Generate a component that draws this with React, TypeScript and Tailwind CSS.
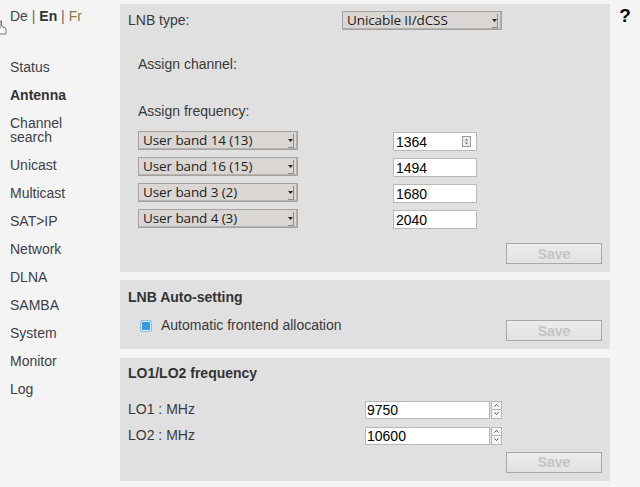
import React from "react";

const navItems = [
  "Status",
  "Antenna",
  "Channel search",
  "Unicast",
  "Multicast",
  "SAT>IP",
  "Network",
  "DLNA",
  "SAMBA",
  "System",
  "Monitor",
  "Log",
];

function DropSelect({ value, width }: { value: string; width: string }) {
  return (
    <div
      className={`${width} h-[19px] flex items-center border border-[#a3a3a3] bg-[#d9d6d3] shadow-[inset_-1px_-1px_0_#b5b2ae] pl-[4px] pr-[3px]`}
      style={{ fontFamily: '"Open Sans", "Noto Sans", sans-serif' }}
    >
      <span className="flex-1 text-[13.5px] leading-none text-[#1e1e1e] tracking-[-0.1px]">{value}</span>
      <span className="flex h-[14px] w-[6px] items-center justify-center border-r border-b border-[#8e8b88]">
        <svg width="5" height="3" viewBox="0 0 5 3">
          <path d="M0 0h5L2.5 3z" fill="#222" />
        </svg>
      </span>
    </div>
  );
}

function SaveButton() {
  return (
    <button className="w-[96px] h-[21px] border border-[#a8a8a8] bg-gradient-to-b from-[#ececec] to-[#e2e2e2] text-[14px] font-bold leading-none text-[#c4c4c4]">
      Save
    </button>
  );
}

function SpinPair() {
  return (
    <div className="flex flex-col w-[11px] h-[18px] ml-px">
      <div className="flex-1 flex items-center justify-center border border-[#b8b8b8] bg-[#f4f4f4]">
        <svg width="5" height="3" viewBox="0 0 5 3">
          <path d="M0.5 2.5L2.5 0.5L4.5 2.5" stroke="#444" strokeWidth="0.9" fill="none" />
        </svg>
      </div>
      <div className="flex-1 flex items-center justify-center border border-t-0 border-[#b8b8b8] bg-[#f4f4f4]">
        <svg width="5" height="3" viewBox="0 0 5 3">
          <path d="M0.5 0.5L2.5 2.5L4.5 0.5" stroke="#444" strokeWidth="0.9" fill="none" />
        </svg>
      </div>
    </div>
  );
}

export default function App() {
  const bands = [
    ["User band 14 (13)", "1364"],
    ["User band 16 (15)", "1494"],
    ["User band 3 (2)", "1680"],
    ["User band 4 (3)", "2040"],
  ];

  return (
    <div
      className="w-[640px] h-[487px] overflow-hidden bg-[#f4f4f4] flex text-[#3a3a3a]"
      style={{ fontFamily: '"Liberation Sans", Arial, sans-serif' }}
    >
      {/* sidebar */}
      <aside className="w-[120px] shrink-0 relative pl-[10px] pt-[8px] text-[14px]">
        <div className="leading-[17px] text-[#444]">
          De <span className="text-[#666]">|</span> <b className="text-[#333]">En</b>{" "}
          <span className="text-[#666]">|</span> <span className="text-[#8c7b3c]">Fr</span>
        </div>
        <svg className="absolute left-[-4px] top-[20px]" width="12" height="16" viewBox="0 0 12 16">
          <path
            d="M4 1v8L2 7.5 0.5 8.5 4 14h6V8.5L8.5 7.5 7 7.6V6.5L5.5 6V1z"
            fill="#fff"
            stroke="#555"
            strokeWidth="0.8"
          />
        </svg>
        <nav className="mt-[35px] flex flex-col gap-[14px] w-[90px]">
          {navItems.map((item) => (
            <a
              key={item}
              className={`block leading-[14px] ${item === "Antenna" ? "font-bold text-[#333]" : "text-[#3e3e48]"}`}
            >
              {item}
            </a>
          ))}
        </nav>
      </aside>

      {/* main settings column */}
      <main className="w-[490px] shrink-0 pt-[4px] flex flex-col gap-[8px] text-[14px]">
        {/* LNB type */}
        <section className="bg-[#e0e0e0] pl-[8px] pr-[8px] pt-[7px] pb-[8px]">
          <div className="flex items-center h-[19px]">
            <span className="w-[214px] leading-[17px]">LNB type:</span>
            <DropSelect value="Unicable II/dCSS" width="w-[160px]" />
          </div>
          <div className="pl-[10px] mt-[26px] leading-[17px]">Assign channel:</div>
          <div className="pl-[10px] mt-[30px] leading-[17px]">Assign frequency:</div>
          <div className="pl-[10px] mt-[11px] flex flex-col gap-[7px]">
            {bands.map(([band, freq], i) => (
              <div key={band} className="flex h-[19px]">
                <DropSelect value={band} width="w-[160px]" />
                <div className="ml-[95px] mt-[1px] w-[84px] h-[19px] border border-[#b9b9b9] bg-white flex items-center pl-[2px] pr-[5px]">
                  <span className="flex-1 text-[14px] leading-none text-black">{freq}</span>
                  {i === 0 && (
                    <span className="w-[9px] h-[11px] border border-[#9a9a9a] bg-[#ededed] flex flex-col items-center justify-center gap-px">
                      <svg width="5" height="7" viewBox="0 0 5 7">
                        <path d="M2.5 0.5L4 2.5H1z" fill="#666" />
                        <path d="M2.5 6.5L4 4.5H1z" fill="#666" />
                      </svg>
                    </span>
                  )}
                </div>
              </div>
            ))}
          </div>
          <div className="flex justify-end mt-[15px]">
            <SaveButton />
          </div>
        </section>

        {/* LNB Auto-setting */}
        <section className="bg-[#e0e0e0] pl-[8px] pr-[8px] pt-[9px] pb-[7px]">
          <h2 className="font-bold leading-[17px] text-[#333]">LNB Auto-setting</h2>
          <div className="flex items-start mt-[10px]">
            <div className="flex items-center flex-1 pl-[12px] mt-[1px]">
              <span className="w-[12px] h-[12px] rounded-[2px] border border-[#88c3ec] bg-[#3a9be0] shadow-[inset_0_0_0_1px_#d6ecfa]" />
              <span className="ml-[9px] leading-[17px]">Automatic frontend allocation</span>
            </div>
            <div className="mt-[4px]">
              <SaveButton />
            </div>
          </div>
        </section>

        {/* LO1/LO2 frequency */}
        <section className="bg-[#e0e0e0] pl-[8px] pr-[8px] pt-[7px] pb-[8px] mt-px">
          <h2 className="font-bold leading-[17px] text-[#333]">LO1/LO2 frequency</h2>
          <div className="mt-[19px] flex flex-col gap-[8px]">
            {[
              ["LO1 : MHz", "9750"],
              ["LO2 : MHz", "10600"],
            ].map(([label, val]) => (
              <div key={label} className="flex items-center h-[18px]">
                <span className="w-[237px] leading-[17px]">{label}</span>
                <div className="w-[125px] h-[18px] border border-[#b9b9b9] bg-white flex items-center pl-[1px]">
                  <span className="text-[14px] leading-none text-black">{val}</span>
                </div>
                <SpinPair />
              </div>
            ))}
          </div>
          <div className="flex justify-end mt-[7px]">
            <SaveButton />
          </div>
        </section>
      </main>

      <div className="flex-1 flex justify-center pt-[4px]">
        <span className="text-[19px] font-bold leading-[24px] text-black">?</span>
      </div>
    </div>
  );
}
